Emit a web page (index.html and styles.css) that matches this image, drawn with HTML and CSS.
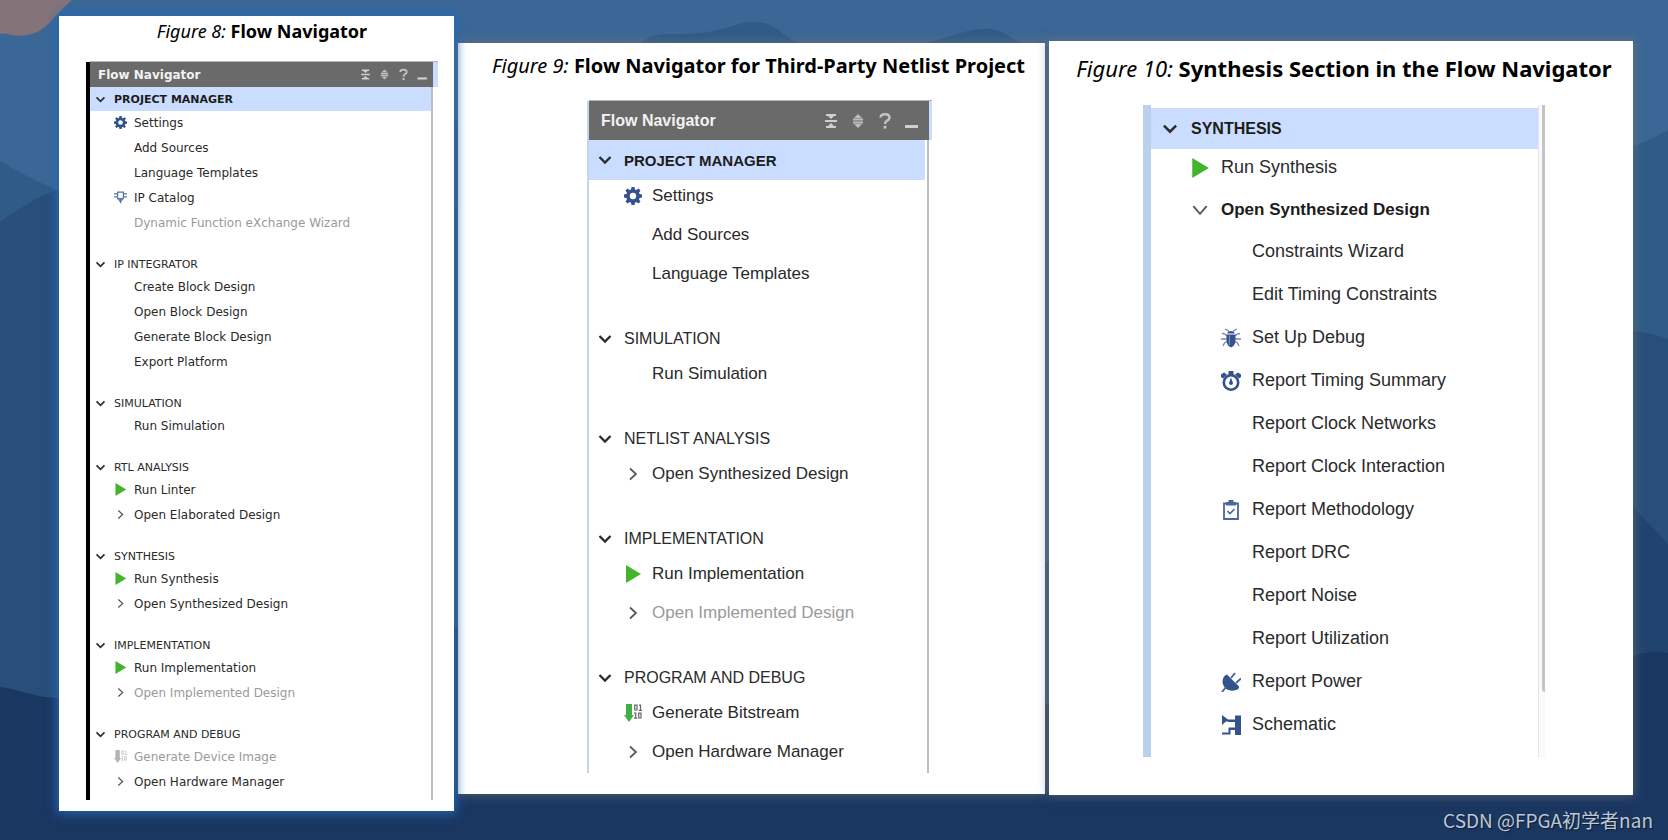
FILE: index.html
```html
<!DOCTYPE html>
<html lang="en">
<head>
<meta charset="utf-8">
<title>Flow Navigator</title>
<link rel="stylesheet" href="styles.css">
</head>
<body>
<svg class="backdrop" viewBox="0 0 1668 840" preserveAspectRatio="none" aria-hidden="true">
  <rect width="1668" height="840" fill="#3b6796"/>
  <path fill="#2e5b87" d="M0 161 Q28 178 59 191 C300 260 520 60 641 43 C655 30 670 36 700 33 C730 30 735 22 755 22 C775 22 780 34 798 43 L925 43 C950 38 965 29 985 29 C1005 29 1008 38 1022 43 L1500 120 Q1600 160 1640 144 Q1652 139 1668 130 V840 H0Z"/>
  <path fill="#284f7a" d="M0 222 Q38 195 59 190 C180 180 350 200 456 207 C700 400 900 560 1047 562 C1250 560 1500 325 1633 331 Q1650 332 1668 339 V840 H0Z"/>
  <path fill="#21436f" d="M1400 640 L1560 480 Q1600 490 1633 507 L1668 544 V840 H1400Z"/>
  <path fill="#1a3762" d="M0 687 C20 689 30 697 59 698 C200 700 350 640 456 627 C700 640 1000 720 1300 720 C1450 720 1550 670 1633 656 Q1650 650 1668 653 V840 H0Z"/>
  <path fill="#85737a" d="M0 0 H72 C62 8 55 18 46 26 C34 37 18 37 8 34 Q4 33 0 34Z"/>
</svg>

<svg class="sprite" aria-hidden="true">
  <symbol id="down" viewBox="0 0 18 18"><path d="M3.500 6 L9 11.500 L14.500 6" fill="none" stroke="#2b2b2b" stroke-width="2.300"/></symbol>
  <symbol id="down-thin" viewBox="0 0 18 18"><path d="M3 5.500 L9 12.500 L15 5.500" fill="none" stroke="#555" stroke-width="1.600"/></symbol>
  <symbol id="right" viewBox="0 0 18 18"><path d="M6 3.500 L12 9 L6 14.500" fill="none" stroke="#555" stroke-width="1.700"/></symbol>
  <symbol id="play" viewBox="0 0 18 18"><path d="M2 0 L17 9 L2 18Z" fill="#42b52c"/></symbol>
  <symbol id="gear" viewBox="0 0 18 18">
    <path fill="#34528c" fill-rule="evenodd" d="M7.500 0h3l.5 2.500 1.300.6L14.500 1.600l2 2-1.500 2.200.6 1.300 2.400.5v3l-2.400.5-.6 1.300 1.500 2.200-2 2-2.200-1.500-1.300.6-.5 2.300h-3l-.5-2.300-1.300-.6-2.200 1.500-2-2L3 12.400l-.6-1.300L0 10.600v-3l2.400-.5L3 5.800 1.500 3.600l2-2L5.700 3.100 7 2.500zM9 5.800a3.200 3.200 0 1 0 0 6.400a3.200 3.200 0 1 0 0-6.400z"/>
  </symbol>
  <symbol id="chip" viewBox="0 0 18 18"><path d="M5 1.500H13V10.500H5Z M0 4H5 M0 8H5 M13 4H18 M13 8H18 M9 11V17 M6 11L9 15L12 11" fill="none" stroke="#5876aa" stroke-width="1.700"/></symbol>
  <symbol id="bits" viewBox="0 0 18 18">
    <path fill="#3fb045" d="M2 0H8V11H10L5 18L0 11H2Z"/>
    <path d="M10.700 1.200H13V6H10.700Z M15 1.200H16.500V6 M14.800 6.300H18 M10 9.200H11.700V14 M10 14.200H13.200 M14.700 9.200H17V14H14.700Z" fill="none" stroke="#666" stroke-width="1.200"/>
  </symbol>
  <symbol id="bits-off" viewBox="0 0 18 18">
    <path fill="#b4b4b4" d="M2 0H8V11H10L5 18L0 11H2Z"/>
    <path d="M10.700 1.200H13V6H10.700Z M15 1.200H16.500V6 M14.800 6.300H18 M10 9.200H11.700V14 M10 14.200H13.200 M14.700 9.200H17V14H14.700Z" fill="none" stroke="#c0c0c0" stroke-width="1.100"/>
  </symbol>
  <symbol id="bug" viewBox="0 0 20 20">
    <path d="M4 1L7 2.500L8 4 M16 1L13 2.500L12 4 M1 5.500L4 6L6 8 M19 5.500L16 6L14 8 M0 11H6 M20 11H14 M2 18L3.500 15L6 13.500 M18 18L16.500 15L14 13.500" fill="none" stroke="#7287b0" stroke-width="1.300"/>
    <path fill="#34528c" d="M6.500 4.500Q10 1.500 13.500 4.500V5.500H6.500Z M5.500 6.500H14.500V13Q14 18 10 19.500Q6 18 5.500 13Z"/>
    <path d="M8.500 7.500V17" stroke="#7d92ba" stroke-width="1"/>
  </symbol>
  <symbol id="clock" viewBox="0 0 20 20">
    <circle cx="10" cy="11.500" r="7.200" fill="none" stroke="#34528c" stroke-width="2.600"/>
    <path fill="#34528c" d="M7.500 0H12.500V4H7.500Z M0 3.500L3 1.500L6 3.500L2 7.500L0 6Z M20 3.500L17 1.500L14 3.500L18 7.500L20 6Z M10 6.500L12 12A2 2 0 1 1 8 12Z"/>
  </symbol>
  <symbol id="clipboard" viewBox="0 0 20 20">
    <path d="M3 3.500H17V19H3Z" fill="none" stroke="#4b669c" stroke-width="1.800"/>
    <path fill="#4b669c" d="M7.500 0H12.500V2H15V5.500H5V2H7.500Z"/>
    <path d="M6.500 11L9 13.500L13.500 9" fill="none" stroke="#4b669c" stroke-width="1.600"/>
  </symbol>
  <symbol id="plug" viewBox="0 0 20 20">
    <path fill="#34528c" d="M6 2.500L18 14.500Q18.500 17 15 18Q10 19.500 6 17.500Q2 15 1.500 10Q1.500 4 6 2.500Z"/>
    <path d="M10 6L14 1 M15 11L20 6.500 M5 15L1 20" stroke="#4b669c" stroke-width="2" fill="none"/>
  </symbol>
  <symbol id="schematic" viewBox="0 0 20 20">
    <path fill="#34528c" d="M1 0L7 4.500L1 10Z M14 0.500H20V20H14V15H9V13H14V7H7V5H14Z"/>
    <path d="M1 18.500H8.500V13.500H14 M3 5.500H14" stroke="#34528c" stroke-width="2" fill="none"/>
  </symbol>
  <symbol id="collapse" viewBox="0 0 18 18"><path fill="#cfcfcf" d="M4 2H14V4H12L9 7L6 4H4Z M3 8H15V10H3Z M9 11L12 14H14V16H4V14H6Z"/></symbol>
  <symbol id="expand" viewBox="0 0 18 18"><path fill="#bdbdbd" d="M9 2L13 6H5Z M4 6.500H14V8.500H4Z M4 9.500H14V11.500H4Z M5 12H13L9 16Z"/></symbol>
  <symbol id="help" viewBox="0 0 18 18"><path d="M4.500 5.500Q4.500 2.200 9 2.200Q13.500 2.200 13.500 5.500Q13.500 7.500 11 8.700Q9 9.800 9 12" fill="none" stroke="#c4c4c4" stroke-width="2.400"/><rect x="7.600" y="13.800" width="2.800" height="2.800" fill="#c4c4c4"/></symbol>
  <symbol id="minimize" viewBox="0 0 18 18"><path fill="#cfcfcf" d="M2 13H15V16H2Z"/></symbol>
</svg>

<main class="board">
  <figure class="card card-small">
    <figcaption class="caption"><em>Figure 8:</em> <b>Flow Navigator</b></figcaption>
    <nav class="panel" aria-label="Flow Navigator">
      <header class="bar">
        <h2 class="bar-title">Flow Navigator</h2>
        <button class="tool" aria-label="Collapse all"><svg class="icon"><use href="#collapse"/></svg></button>
        <button class="tool" aria-label="Expand all"><svg class="icon"><use href="#expand"/></svg></button>
        <button class="tool" aria-label="Help"><svg class="icon"><use href="#help"/></svg></button>
        <button class="tool" aria-label="Minimize"><svg class="icon"><use href="#minimize"/></svg></button>
      </header>
      <div class="tree">
        <section class="group">
          <button class="head selected"><svg class="icon"><use href="#down"/></svg>PROJECT MANAGER</button>
          <button class="item"><svg class="icon"><use href="#gear"/></svg>Settings</button>
          <button class="item"><span class="icon"></span>Add Sources</button>
          <button class="item"><span class="icon"></span>Language Templates</button>
          <button class="item"><svg class="icon"><use href="#chip"/></svg>IP Catalog</button>
          <button class="item" disabled><span class="icon"></span>Dynamic Function eXchange Wizard</button>
        </section>
        <section class="group">
          <button class="head"><svg class="icon"><use href="#down"/></svg>IP INTEGRATOR</button>
          <button class="item"><span class="icon"></span>Create Block Design</button>
          <button class="item"><span class="icon"></span>Open Block Design</button>
          <button class="item"><span class="icon"></span>Generate Block Design</button>
          <button class="item"><span class="icon"></span>Export Platform</button>
        </section>
        <section class="group">
          <button class="head"><svg class="icon"><use href="#down"/></svg>SIMULATION</button>
          <button class="item"><span class="icon"></span>Run Simulation</button>
        </section>
        <section class="group">
          <button class="head"><svg class="icon"><use href="#down"/></svg>RTL ANALYSIS</button>
          <button class="item"><svg class="icon"><use href="#play"/></svg>Run Linter</button>
          <button class="item"><svg class="icon"><use href="#right"/></svg>Open Elaborated Design</button>
        </section>
        <section class="group">
          <button class="head"><svg class="icon"><use href="#down"/></svg>SYNTHESIS</button>
          <button class="item"><svg class="icon"><use href="#play"/></svg>Run Synthesis</button>
          <button class="item"><svg class="icon"><use href="#right"/></svg>Open Synthesized Design</button>
        </section>
        <section class="group">
          <button class="head"><svg class="icon"><use href="#down"/></svg>IMPLEMENTATION</button>
          <button class="item"><svg class="icon"><use href="#play"/></svg>Run Implementation</button>
          <button class="item" disabled><svg class="icon"><use href="#right"/></svg>Open Implemented Design</button>
        </section>
        <section class="group">
          <button class="head"><svg class="icon"><use href="#down"/></svg>PROGRAM AND DEBUG</button>
          <button class="item" disabled><svg class="icon"><use href="#bits-off"/></svg>Generate Device Image</button>
          <button class="item"><svg class="icon"><use href="#right"/></svg>Open Hardware Manager</button>
        </section>
      </div>
    </nav>
  </figure>

  <figure class="card card-medium">
    <figcaption class="caption"><em>Figure 9:</em> <b>Flow Navigator for Third-Party Netlist Project</b></figcaption>
    <nav class="panel" aria-label="Flow Navigator for netlist project">
      <header class="bar">
        <h2 class="bar-title">Flow Navigator</h2>
        <button class="tool" aria-label="Collapse all"><svg class="icon"><use href="#collapse"/></svg></button>
        <button class="tool" aria-label="Expand all"><svg class="icon"><use href="#expand"/></svg></button>
        <button class="tool" aria-label="Help"><svg class="icon"><use href="#help"/></svg></button>
        <button class="tool" aria-label="Minimize"><svg class="icon"><use href="#minimize"/></svg></button>
      </header>
      <div class="tree">
        <section class="group">
          <button class="head selected"><svg class="icon"><use href="#down"/></svg>PROJECT MANAGER</button>
          <button class="item"><svg class="icon"><use href="#gear"/></svg>Settings</button>
          <button class="item"><span class="icon"></span>Add Sources</button>
          <button class="item"><span class="icon"></span>Language Templates</button>
        </section>
        <section class="group">
          <button class="head"><svg class="icon"><use href="#down"/></svg>SIMULATION</button>
          <button class="item"><span class="icon"></span>Run Simulation</button>
        </section>
        <section class="group">
          <button class="head"><svg class="icon"><use href="#down"/></svg>NETLIST ANALYSIS</button>
          <button class="item"><svg class="icon"><use href="#right"/></svg>Open Synthesized Design</button>
        </section>
        <section class="group">
          <button class="head"><svg class="icon"><use href="#down"/></svg>IMPLEMENTATION</button>
          <button class="item"><svg class="icon"><use href="#play"/></svg>Run Implementation</button>
          <button class="item" disabled><svg class="icon"><use href="#right"/></svg>Open Implemented Design</button>
        </section>
        <section class="group">
          <button class="head"><svg class="icon"><use href="#down"/></svg>PROGRAM AND DEBUG</button>
          <button class="item"><svg class="icon"><use href="#bits"/></svg>Generate Bitstream</button>
          <button class="item"><svg class="icon"><use href="#right"/></svg>Open Hardware Manager</button>
        </section>
      </div>
    </nav>
  </figure>

  <figure class="card card-large">
    <figcaption class="caption"><em>Figure 10:</em> <b>Synthesis Section in the Flow Navigator</b></figcaption>
    <nav class="panel" aria-label="Synthesis">
      <div class="tree">
        <section class="group">
          <button class="head selected"><svg class="icon"><use href="#down"/></svg>SYNTHESIS</button>
          <button class="item"><svg class="icon"><use href="#play"/></svg>Run Synthesis</button>
          <button class="item parent"><svg class="icon"><use href="#down-thin"/></svg>Open Synthesized Design</button>
          <button class="item nested"><span class="icon"></span>Constraints Wizard</button>
          <button class="item nested"><span class="icon"></span>Edit Timing Constraints</button>
          <button class="item nested"><svg class="icon"><use href="#bug"/></svg>Set Up Debug</button>
          <button class="item nested"><svg class="icon"><use href="#clock"/></svg>Report Timing Summary</button>
          <button class="item nested"><span class="icon"></span>Report Clock Networks</button>
          <button class="item nested"><span class="icon"></span>Report Clock Interaction</button>
          <button class="item nested"><svg class="icon"><use href="#clipboard"/></svg>Report Methodology</button>
          <button class="item nested"><span class="icon"></span>Report DRC</button>
          <button class="item nested"><span class="icon"></span>Report Noise</button>
          <button class="item nested"><span class="icon"></span>Report Utilization</button>
          <button class="item nested"><svg class="icon"><use href="#plug"/></svg>Report Power</button>
          <button class="item nested"><svg class="icon"><use href="#schematic"/></svg>Schematic</button>
        </section>
      </div>
      <div class="track"><div class="thumb"></div></div>
    </nav>
  </figure>
</main>
<footer class="watermark">CSDN @FPGA初学者nan</footer>
</body>
</html>
```
FILE: styles.css
```css
* { box-sizing: border-box; }

body {
  margin: 0;
  min-height: 100vh;
  position: relative;
  background: #1a3762;
}

.backdrop {
  position: absolute;
  inset: 0;
  width: 100%;
  height: 100%;
}

.sprite {
  position: absolute;
  width: 0;
  height: 0;
}

.board {
  position: relative;
  display: grid;
  grid-template-columns: minmax(0, 395fr) minmax(0, 587fr) minmax(0, 584fr);
  align-items: start;
  gap: 4px;
  padding: 16px 35px 29px 59px;
}

.card {
  margin: 0;
  background: #fff;
}

.caption {
  text-align: center;
  font-family: "Noto Sans", sans-serif;
  line-height: 28px;
  color: #000;
  white-space: nowrap;
}

button {
  border: 0;
  background: none;
  padding: 0;
  margin: 0;
  color: inherit;
  font: inherit;
  text-align: left;
}

.icon {
  display: block;
  flex: none;
  width: var(--icon);
  height: var(--icon);
}

.bar {
  display: flex;
  align-items: center;
  background: #6a6a6a;
  color: #f2f2f2;
  border-right: 5px solid #cbddff;
  box-shadow: 0 -1px #b5b5b5;
}

.bar-title {
  flex: 1;
  margin: 0;
  font-weight: bold;
}

.tree {
  color: #2a2a2a;
  border-right: 2px solid #bdbdbd;
}

.group {
  display: flex;
  flex-direction: column;
}

.head,
.item {
  display: flex;
  align-items: center;
  gap: var(--gap);
  white-space: nowrap;
}

.item:disabled { color: #9a9a9a; }

.selected {
  background: #cbddff;
  color: #1c1c1c;
  font-weight: bold;
}

/* Figure 8 */
.card-small {
  --icon: 13px;
  --gap: 7px;
  z-index: 1;
  padding: 1px 16px 11px 27px;
  box-shadow: 0 0 10px 2px #2468b4;
}
.card-small .caption { font-size: 18px; margin: 0 -16px 17px; }
.card-small .panel {
  border-left: 4px solid #000;
  padding-bottom: 6px;
  font: 12px "DejaVu Sans", sans-serif;
  background: linear-gradient(#bdbdbd, #bdbdbd) right 5px top 0 / 2px 100% no-repeat;
}
.card-small .bar { height: 25px; gap: 6px; padding: 0 4px 0 8px; }
.card-small .bar-title { font-size: 12px; }
.card-small .tree { margin-right: 5px; }
.card-small .group + .group { margin-top: 19px; }
.card-small .head { height: 20px; padding-left: 4px; font-size: 11px; }
.card-small .selected { height: 24px; margin-bottom: -1px; }
.card-small .item { height: 25px; padding-left: 24px; }

/* Figure 9 */
.card-medium {
  --icon: 18px;
  --gap: 10px;
  margin-top: 27px;
  padding: 9px 113px 21px 129px;
  box-shadow: 0 0 10px 1px rgba(120, 120, 120, 0.6);
}
.card-medium .caption { font-size: 20px; margin: 0 -113px 21px -115px; }
.card-medium .panel {
  border-left: 2px solid #bfd6ee;
  padding-bottom: 2px;
  font: 17px "Liberation Sans", Arial, sans-serif;
  background: linear-gradient(#bdbdbd, #bdbdbd) right 3px top 0 / 2px 100% no-repeat;
}
.card-medium .bar { height: 39px; gap: 9px; padding: 0 8px 0 12px; border-right-width: 3px; }
.card-medium .bar-title { font-size: 16px; }
.card-medium .tree { margin-right: 3px; }
.card-medium .group + .group { margin-top: 30px; }
.card-medium .head { height: 31px; padding-left: 7px; font-size: 16px; }
.card-medium .selected { height: 40px; margin: 0 2px -4px 0; font-size: 15px; }
.card-medium .item { height: 39px; padding-left: 35px; }

/* Figure 10 */
.card-large {
  --icon: 20px;
  --gap: 11px;
  margin-top: 25px;
  padding: 13px 88px 38px 94px;
  box-shadow: 0 0 10px 1px rgba(120, 120, 120, 0.6);
}
.card-large .caption { font-size: 22px; margin: 0 -88px 23px; }
.card-large .panel {
  display: flex;
  border-left: 8px solid #b9d1ea;
  font: 18px "Liberation Sans", Arial, sans-serif;
}
.card-large .tree { flex: 1; padding: 3px 0 11px; border-right: 1px solid #e4e4e4; }
.card-large .head { height: 41px; padding-left: 9px; }
.card-large .selected { margin-bottom: -3px; font-size: 16px; }
.card-large .item { height: 43px; padding-left: 39px; }
.card-large .parent { height: 41px; font-size: 17px; font-weight: bold; color: #1c1c1c; }
.card-large .nested { padding-left: 70px; }

.track { width: 6px; padding-left: 3px; background: #fafafa; }
.thumb { height: 90%; background: #c4c4c4; border-bottom-left-radius: 3px; }

.watermark {
  position: absolute;
  right: 15px;
  bottom: 6px;
  color: #bfc7d2;
  font: 19px/28px "Noto Sans CJK SC", sans-serif;
  text-shadow: 1px 1px 1px #0c1c34;
}
```
